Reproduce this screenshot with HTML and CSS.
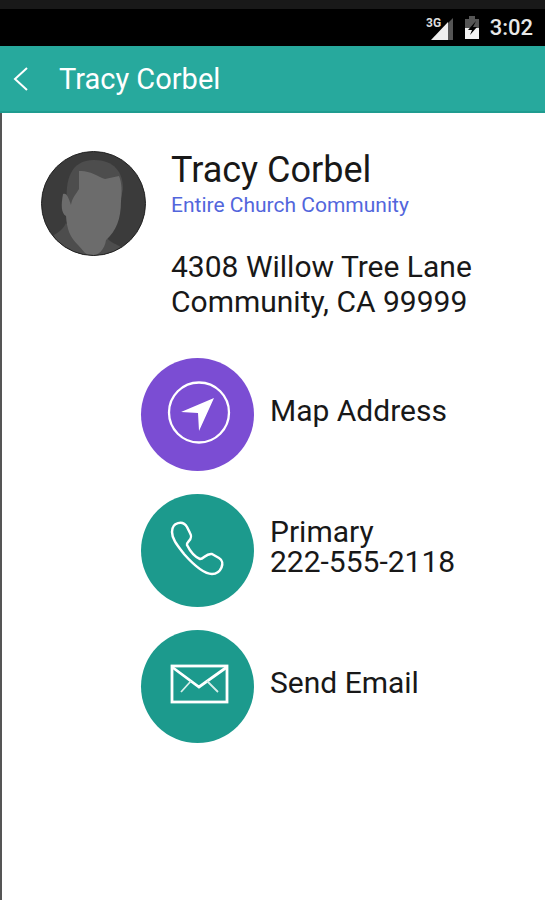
FILE: index.html
```html
<!DOCTYPE html>
<html lang="en">
<head>
  <meta charset="UTF-8">
  <meta name="viewport" content="width=device-width, initial-scale=1.0">
  <title>Tracy Corbel</title>
  <link rel="stylesheet" href="styles.css">
</head>
<body>
  <div class="status-bar">
    <svg class="signal" width="28" height="26" viewBox="0 0 28 26" aria-hidden="true">
      <path d="M22 8 L27 3 V25 H22 Z" fill="#555"/>
      <path d="M5 25 L22 7 V25 Z" fill="#eee"/>
      <text class="signal-text" x="0" y="12">3G</text>
    </svg>
    <svg class="battery" width="16" height="24" viewBox="0 0 16 24" aria-hidden="true">
      <path d="M1 12 V3 H5 V0 H11 V3 H15 V12 Z" fill="#555"/>
      <path d="M1 12 H15 V23 H1 Z" fill="#f4f4f4"/>
      <path d="M12 5 L4 14 H8 L6 19 L13 11 H9 Z" fill="#000"/>
    </svg>
    <span class="time">3:02</span>
  </div>

  <header class="top-bar">
    <button type="button" class="back" aria-label="Back">
      <svg width="16" height="24" viewBox="0 0 16 24">
        <path d="M14 1 L2 12 L14 23" fill="none" stroke="#fff" stroke-width="2"/>
      </svg>
    </button>
    <h1>Tracy Corbel</h1>
  </header>

  <main>
    <section class="profile">
      <svg class="avatar" viewBox="0 0 105 105" role="img" aria-label="Profile photo">
        <defs>
          <clipPath id="round"><circle cx="52.500" cy="52.500" r="52"/></clipPath>
        </defs>
        <g clip-path="url(#round)">
          <rect width="105" height="105" fill="#3b3b3b"/>
          <path d="M8 88 C14 82 21 81 25 72 L40 90 L65 86 C70 92 75 93 80 96 L85 105 H8 Z" fill="#4d4d4d"/>
          <path d="M26 53 C24 30 29 9 53 9 C73 9 82 21 82 38 L79 52 L28 55 Z" fill="#4d4d4d"/>
          <path d="M38 20 C48 19 56 25 64 28 L78 25 C81 32 81 41 80 50 C80 68 75 80 65 89 C64 98 57 105 51 105 C45 105 42 99 37 94 C29 86 26 79 25 65 C20 62 20 54 22 43 C26 41 28 48 30 54 C31 47 35 43 38 38 Z" fill="#6c6c6c"/>
        </g>
        <circle cx="52.500" cy="52.500" r="52" fill="none" stroke="#222"/>
      </svg>
      <div class="details">
        <h2>Tracy Corbel</h2>
        <a href="#" class="group">Entire Church Community</a>
        <address>4308 Willow Tree Lane<br>Community, CA 99999</address>
      </div>
    </section>

    <nav class="actions">
      <a href="#" class="action">
        <svg class="icon map" viewBox="0 0 113 113" aria-hidden="true">
          <circle cx="58" cy="54.500" r="30" fill="none" stroke="#fff" stroke-width="2.300"/>
          <path d="M73 40 L58 73 L57 55 L40 54 Z" fill="#fff"/>
        </svg>
        <span>Map Address</span>
      </a>
      <a href="#" class="action">
        <svg class="icon" viewBox="0 0 113 113" aria-hidden="true">
          <path d="M31 38 C31 28 42 26 46 33 L49 39 C53 46 45 47 46 51 C49 57 54 63 59 65 C63 65 65 59 71 60 L78 64 C85 68 80 80 71 80 C62 80 51 69 43 60 C36 51 31 45 31 38 Z" fill="none" stroke="#fff" stroke-width="2.500" stroke-linejoin="round"/>
        </svg>
        <span>Primary<br>222-555-2118</span>
      </a>
      <a href="#" class="action">
        <svg class="icon" viewBox="0 0 113 113" aria-hidden="true">
          <g fill="none" stroke="#fff" stroke-width="2.800">
            <rect x="31" y="36" width="55" height="36"/>
            <path d="M31 37 L58 57 L86 37"/>
            <path d="M50 51 L40 62 M66 51 L77 62" stroke-width="1.800" stroke="#d5eeea"/>
          </g>
        </svg>
        <span>Send Email</span>
      </a>
    </nav>
  </main>
</body>
</html>
```
FILE: styles.css
```css
* {
  box-sizing: border-box;
}
body {
  display: flex;
  flex-direction: column;
  margin: 0;
  min-height: 100vh;
  font-family: Roboto, "Liberation Sans", sans-serif;
  color: #181818;
  background-color: #fff;
}
h1, h2 {
  margin: 0;
  font-weight: 400;
}
a {
  color: inherit;
  text-decoration: none;
}
.status-bar {
  display: flex;
  align-items: center;
  justify-content: flex-end;
  gap: 10px;
  height: 46px;
  padding-right: 12px;
  background: #000;
  border-top: 9px solid #191919;
}
.signal-text {
  font-size: 12px;
  font-weight: 700;
  fill: #ddd;
  stroke: #000;
  stroke-width: 2px;
  paint-order: stroke;
}
.time {
  font-size: 22px;
  font-weight: 500;
  color: #e8e8e8;
}
.top-bar {
  display: flex;
  align-items: center;
  gap: 30px;
  height: 67px;
  padding-left: 13px;
  color: #fff;
  background: #27a99d;
  border-bottom: 2px solid #1f9c90;
}
.back {
  display: flex;
  padding: 0;
  border: 0;
  background: none;
  cursor: pointer;
}
.top-bar h1 {
  font-size: 29px;
}
main {
  flex: 1;
  padding: 38px 39px;
  border-left: 2px solid #555;
}
.profile {
  display: flex;
  gap: 25px;
}
.avatar {
  flex: none;
  width: 105px;
  height: 105px;
}
.details h2 {
  font-size: 36px;
  line-height: 38px;
}
.group {
  display: block;
  font-size: 21px;
  line-height: 32px;
  color: #5266dc;
}
address {
  margin-top: 28px;
  font-size: 30px;
  line-height: 35px;
  font-style: normal;
}
.actions {
  display: flex;
  flex-direction: column;
  gap: 23px;
  margin-top: 39px;
  padding-left: 100px;
}
.action {
  display: flex;
  align-items: center;
  gap: 16px;
  font-size: 30px;
  line-height: 30px;
}
.action span {
  padding-bottom: 8px;
}
.icon {
  flex: none;
  width: 113px;
  height: 113px;
  border-radius: 50%;
  background: #1c9a8d;
}
.icon.map {
  background: #7b4dd3;
}
```
